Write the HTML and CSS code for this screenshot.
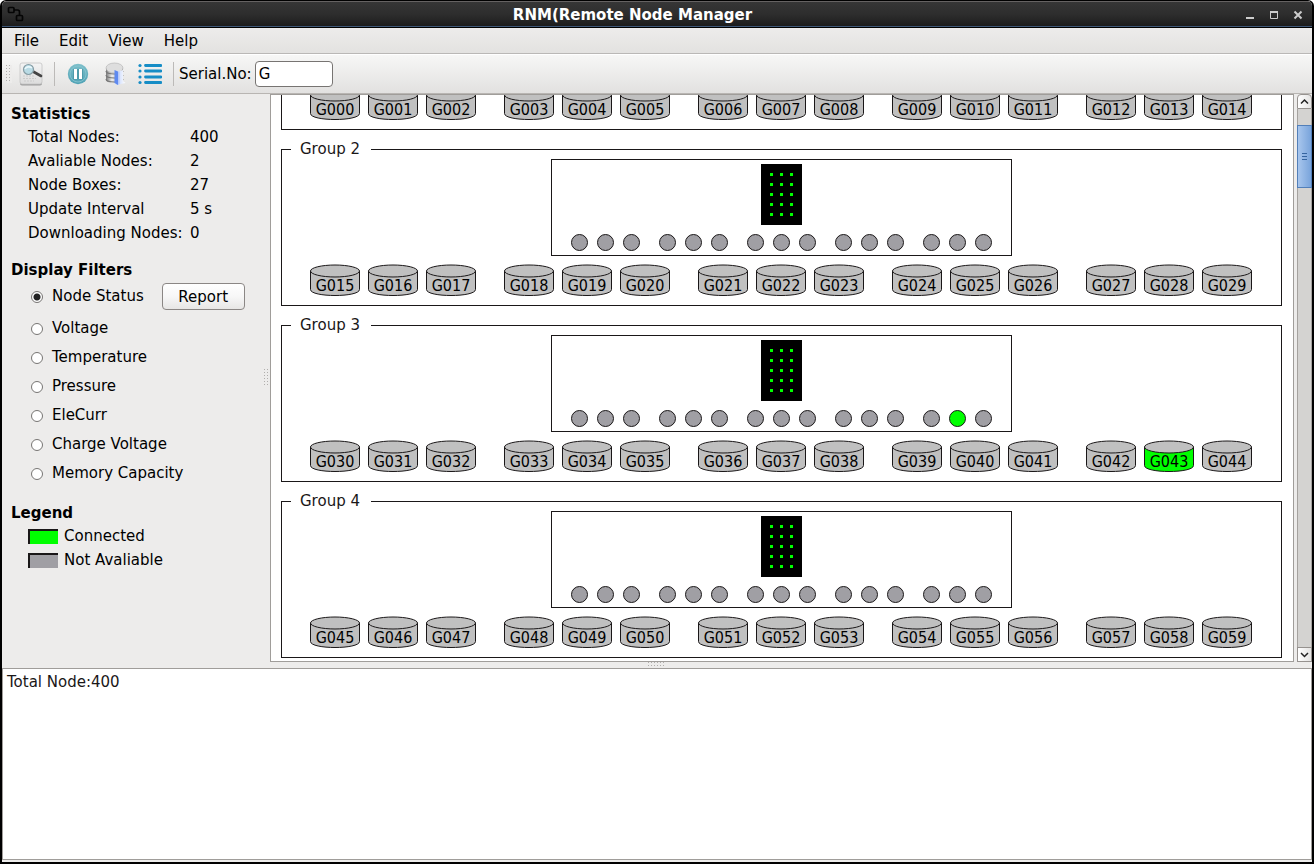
FILE: index.html
```html
<!DOCTYPE html>
<html lang="en">
<head>
<meta charset="utf-8">
<title>RNM(Remote Node Manager</title>
<link rel="stylesheet" href="styles.css">
</head>
<body>
<div class="window">
  <header class="titlebar">
    <svg class="app-icon" width="18" height="18" viewBox="0 0 18 18" fill="none" stroke="#050505" stroke-width="1.7"><rect x="1.500" y="1.500" width="5.500" height="5" rx="1"/><rect x="9.500" y="9.500" width="6" height="5" rx="1"/><path d="M7 4h3.500q2 0 2 2v3.500"/></svg>
    <h1 class="title">RNM(Remote Node Manager</h1>
    <div class="window-buttons">
      <button type="button" aria-label="Minimize"><svg width="10" height="10"><path d="M1 8h8" stroke="#ccc" stroke-width="2"/></svg></button>
      <button type="button" aria-label="Maximize"><svg width="10" height="10"><path d="M1.500 2.500h7v6h-7z" fill="none" stroke="#ccc"/><path d="M1 2h8" stroke="#ccc" stroke-width="2"/></svg></button>
      <button type="button" aria-label="Close"><svg width="10" height="10"><path d="M1.500 1.500l7 7M8.500 1.500l-7 7" stroke="#ccc" stroke-width="2"/></svg></button>
    </div>
  </header>
  <nav class="menubar">
    <button type="button">File</button><button type="button">Edit</button><button type="button">View</button><button type="button">Help</button>
  </nav>
  <div class="toolbar">
    <span class="grip toolbar-grip"></span>
    <button type="button" class="tool tool-search" aria-label="Search">
      <svg width="24" height="24" viewBox="0 0 24 24">
        <defs><linearGradient id="paper" x2="0" y2="1"><stop stop-color="#f4f4f4"/><stop offset="1" stop-color="#dcdcdc"/></linearGradient></defs>
        <rect x="1" y="2" width="22" height="21.500" rx="2" fill="#9c9c9c"/><rect x="1" y="1" width="22" height="21" rx="2" fill="url(#paper)" stroke="#c4c4c4" stroke-width=".8"/>
        <path d="M4 14h12M4 16.500h13M5 19h10" stroke="#cbcbcb" stroke-dasharray="2 1"/>
        <path d="M14 9.500l8 4.500" stroke="#444" stroke-width="2.600" stroke-linecap="round"/>
        <circle cx="9.500" cy="7.500" r="5" fill="#b9dbe5" stroke="#879da5" stroke-width="1.200"/><path d="M6 7a4 3 0 0 1 7-1" fill="none" stroke="#e9f8fc" stroke-width="1.600"/>
      </svg>
    </button>
    <span class="separator"></span>
    <button type="button" class="tool tool-pause" aria-label="Pause">
      <svg width="24" height="24" viewBox="0 0 24 24"><defs><linearGradient id="teal" x2="0" y2="1"><stop stop-color="#7dbfca"/><stop offset="1" stop-color="#50a2b5"/></linearGradient></defs><circle cx="12" cy="12" r="10.200" fill="url(#teal)"/><circle cx="12" cy="12" r="8" fill="none" stroke="#8ac7d0" stroke-width=".8"/><path d="M9.500 7v10.500M14.500 7v10.500" stroke="#4794a5" stroke-width="4.500"/><path d="M9.500 7v10M14.500 7v10" stroke="#fff" stroke-width="3"/></svg>
    </button>
    <button type="button" class="tool tool-data" aria-label="Database">
      <svg width="24" height="24" viewBox="0 0 24 24"><defs><linearGradient id="metal"><stop stop-color="#777"/><stop offset=".35" stop-color="#eee"/><stop offset="1" stop-color="#999"/></linearGradient><linearGradient id="sheet"><stop stop-color="#c1d2fb"/><stop offset="1" stop-color="#fff"/></linearGradient></defs>
        <path d="M3 6v12c0 4 17 4 17 0V6z" fill="url(#metal)"/><path d="M3 9c0 4 17 4 17 0M3 13c0 4 17 4 17 0M3 17c0 4 17 4 17 0" fill="none" stroke="#777" stroke-width="1.200"/><ellipse cx="11.500" cy="6" rx="8.500" ry="5" fill="#dedede" stroke="#b0b0b0" stroke-width=".6"/>
        <path d="M14 10l6-2v11l2.500 2-9 2z" fill="url(#sheet)"/><path d="M11.500 8l3.500 1.500V23l-3.500-2z" fill="#5f8af0"/><path d="M15 9.500V23l1.500-1V10z" fill="#b6cafa"/></svg>
    </button>
    <button type="button" class="tool tool-list" aria-label="List">
      <svg width="24" height="24" viewBox="0 0 24 24"><path d="M7.500 3.500H23M7.500 9H23M7.500 15H23M7.500 20.500H23" stroke="#168dc6" stroke-width="2.800" stroke-linecap="round"/><g fill="#168dc6"><circle cx="2" cy="3.500" r="1.600"/><circle cx="2" cy="9" r="1.600"/><circle cx="2" cy="15" r="1.600"/><circle cx="2" cy="20.500" r="1.600"/></g></svg>
    </button>
    <span class="separator"></span>
    <label for="serial">Serial.No:</label><input class="serial" id="serial" type="text" value="G">
  </div>
  <main class="main">
    <aside class="sidebar">
      <section>
        <h2>Statistics</h2>
        <dl class="stats">
          <dt>Total Nodes:</dt><dd>400</dd>
          <dt>Avaliable Nodes:</dt><dd>2</dd>
          <dt>Node Boxes:</dt><dd>27</dd>
          <dt>Update Interval</dt><dd>5 s</dd>
          <dt>Downloading Nodes:</dt><dd>0</dd>
        </dl>
      </section>
      <section>
        <h2>Display Filters</h2>
        <div class="filters">
          <div class="filter filter-first"><label><input type="radio" name="filter" checked>Node Status</label><button type="button" class="report">Report</button></div>
          <div class="filter"><label><input type="radio" name="filter">Voltage</label></div>
          <div class="filter"><label><input type="radio" name="filter">Temperature</label></div>
          <div class="filter"><label><input type="radio" name="filter">Pressure</label></div>
          <div class="filter"><label><input type="radio" name="filter">EleCurr</label></div>
          <div class="filter"><label><input type="radio" name="filter">Charge Voltage</label></div>
          <div class="filter"><label><input type="radio" name="filter">Memory Capacity</label></div>
        </div>
      </section>
      <section>
        <h2>Legend</h2>
        <ul class="legend">
          <li><span class="swatch swatch-on"></span>Connected</li>
          <li><span class="swatch"></span>Not Avaliable</li>
        </ul>
      </section>
    </aside>
    <div class="splitter-v"><span class="grip splitter-grip-v"></span></div>
    <div class="canvas" id="canvas"></div>
    <div class="scrollbar">
      <button type="button" class="arrow arrow-up" aria-label="Scroll up"><svg width="13" height="13"><path d="M3 8.500l3.500-3.500 3.500 3.500" fill="none" stroke="#222" stroke-width="1.500"/></svg></button>
      <div class="track"><div class="thumb"><svg width="13" height="9"><path d="M4 1.500h5M4 4.500h5M4 7.500h5" stroke="#35649f"/></svg></div></div>
      <button type="button" class="arrow" aria-label="Scroll down"><svg width="13" height="13"><path d="M3 5l3.500 3.500L10 5" fill="none" stroke="#222" stroke-width="1.500"/></svg></button>
    </div>
  </main>
  <div class="splitter-h"><span class="grip splitter-grip-h"></span></div>
  <div class="log">Total Node:400</div>
</div>
<script src="app.js"></script>
</body>
</html>
```

FILE: styles.css
```css
* { box-sizing: border-box; }
body, h1, h2, dl, dd, ul { margin: 0; padding: 0; }
body, button, input {
  font-family: "DejaVu Sans", sans-serif;
  font-size: 15px;
  line-height: 20px;
  color: #000;
}
button { margin: 0; padding: 0; border: 0; background: none; }
svg { display: block; }

.window {
  display: flex;
  flex-direction: column;
  height: 100vh;
  background: #edeceb;
  border: solid #000;
  border-width: 1px 2px 2px;
  border-radius: 6px 6px 0 0;
  overflow: hidden;
}

.titlebar {
  display: flex;
  align-items: center;
  flex: none;
  height: 27px;
  padding: 0 9px 0 5px;
  background: linear-gradient(#363636, #2d2d2d 50%, #1b1b1b);
  border-top: 1px solid #656262;
  border-bottom: 1px solid #000;
  box-shadow: inset 0 -1px #3f5878;
}
.title {
  flex: 1;
  padding-right: 5px;
  text-align: center;
  font-size: 15px;
  line-height: 20px;
  color: #fff;
}
.window-buttons { display: flex; gap: 14px; }

.menubar {
  display: flex;
  gap: 2px;
  flex: none;
  height: 26px;
  padding-left: 3px;
  background: linear-gradient(#edeceb, #e3e2e0);
  border-bottom: 1px solid #bab8b6;
}
.menubar button { padding: 1px 9px 0; }

.toolbar {
  display: flex;
  align-items: center;
  flex: none;
  height: 40px;
  padding-left: 4px;
  background: linear-gradient(#f7f7f6, #e2e1e0);
  border-top: 1px solid #fff;
  border-bottom: 1px solid #b8b5b2;
}
.grip {
  background-image: linear-gradient(90deg, transparent 1px, #edeceb 1px), linear-gradient(#b0aeac 1px, transparent 1px);
  background-size: 3px 3px;
}
.toolbar-grip { width: 6px; height: 18px; }
.tool-search { margin: 0 11px 0 7px; }
.separator { width: 1px; height: 24px; background: #bcbab8; }
.tool-pause { margin-left: 11px; }
.tool-data { margin: 0 11px 0 13px; }
.tool-list { margin-right: 11px; }
.toolbar label { margin-left: 5px; }
.serial {
  width: 78px;
  height: 26px;
  margin-left: 3px;
  padding: 0 3px;
  border: 1px solid #777472;
  border-radius: 4px;
  background: #fff;
}

.main { display: flex; flex: 1; min-height: 0; }
.sidebar { width: 262px; flex: none; padding: 10px 0 0 9px; }
.sidebar section { margin-bottom: 15px; }
.sidebar h2 { font-size: 15px; line-height: 21px; }
.stats {
  display: grid;
  grid-template-columns: 162px auto;
  grid-auto-rows: 24px;
  align-items: center;
  padding-left: 17px;
}
.filters { padding: 1px 0 0 20px; }
.filter { display: flex; align-items: center; height: 29px; }
.filter-first { margin-bottom: 3px; }
.filter label { display: flex; align-items: center; line-height: 21px; }
.filter input {
  appearance: none;
  width: 12px;
  height: 12px;
  margin: 0 9px 0 0;
  border: 1px solid #777573;
  border-radius: 50%;
  background: #fff;
}
.filter input:checked { background: radial-gradient(circle, #222 3px, #fff 4px); }
.report {
  width: 83px;
  height: 27px;
  margin-left: 18px;
  border: 1px solid #8b8785;
  border-radius: 4px;
  background: linear-gradient(#fff, #f7f7f7 50%, #e7e6e5);
}
.legend { list-style: none; padding-left: 17px; }
.legend li { display: flex; align-items: center; gap: 6px; height: 24px; }
.swatch {
  width: 30px;
  height: 15px;
  background: #a09fa4;
  border: solid #1a1718;
  border-width: 2px 0 0 2px;
}
.swatch-on { background: #0f0; }

.splitter-v { display: flex; align-items: center; flex: none; width: 6px; }
.splitter-grip-v { width: 6px; height: 18px; }
.splitter-h { display: flex; align-items: center; justify-content: center; flex: none; height: 6px; }
.splitter-grip-h { width: 18px; height: 6px; }

.canvas {
  display: flex;
  flex-direction: column;
  gap: 10px;
  flex: 1;
  min-width: 0;
  padding: 10px 11px 10px 10px;
  overflow: hidden;
  background: #fff;
  border: 1px solid #a09d9a;
}
.group {
  flex: none;
  min-width: 0;
  margin: 0;
  padding: 0 9px 9px;
  border: 1px solid #1a1718;
}
.group legend { width: 80px; height: 19px; padding: 0 9px; line-height: 18px; color: #1a1718; }
.box {
  display: flex;
  flex-direction: column;
  align-items: center;
  gap: 9px;
  width: 461px;
  margin: 0 auto 8px;
  padding: 4px 0;
  border: 1px solid #1a1718;
}
.lamps, .nodes { display: flex; justify-content: center; }
.lamps { gap: 19px; }
.nodes { gap: 28px; padding-right: 1px; }
.trio { display: flex; gap: 8px; }
.lamps .trio { gap: 9px; }
.lamp {
  width: 17px;
  height: 17px;
  border: 1px solid #1a1718;
  border-radius: 50%;
  background: #a09fa4;
}
.lamp-on { background: #0f0; }
.node {
  display: grid;
  width: 50px;
  height: 32px;
  justify-items: center;
  align-items: end;
  font-family: "DejaVu Sans Condensed", "DejaVu Sans", sans-serif;
  font-stretch: condensed;
  font-size: 16px;
  line-height: 19px;
}
.node svg, .node span { grid-area: 1 / 1; }
.node span { padding-bottom: 1px; }
.body, .top { fill: silver; stroke: #1a1718; }
.node-on .body { fill: #0f0; }

.scrollbar { display: flex; flex-direction: column; flex: none; width: 15px; margin-left: 3px; }
.arrow {
  flex: none;
  width: 15px;
  height: 15px;
  border: 1px solid #96928f;
  background: linear-gradient(90deg, #fff, #e4e3e2);
}
.arrow-up { border-radius: 4px 4px 0 0; }
.track { flex: 1; padding-top: 16px; background: #d4d3d1; border: solid #a5a29f; border-width: 0 1px; }
.thumb {
  display: flex;
  align-items: center;
  justify-content: center;
  height: 63px;
  margin: 0 -1px;
  background: linear-gradient(90deg, #a8c6ed, #79a4db);
  border: 1px solid #527fb9;
}
.log {
  flex: none;
  height: 22.2vh;
  margin-bottom: 2px;
  padding: 3px 4px;
  line-height: 21px;
  background: #fff;
  border: 1px solid #a09d9a;
  color: #1a1718;
}
```

FILE: app.js
```js
const TRIOS = 5;
const PER_TRIO = 3;
const PER_GROUP = TRIOS * PER_TRIO;
const connected = new Set([43]);

function ledPanel() {
  let dots = "";
  for (let y = 9; y < 58; y += 10) {
    for (let x = 9; x < 38; x += 10) {
      dots += `<rect x="${x}" y="${y}" width="3" height="3" fill="#0f0"/>`;
    }
  }
  return `<svg width="41" height="61"><rect width="41" height="61"/>${dots}</svg>`;
}

function lamp(id) {
  return `<span class="lamp${connected.has(id) ? " lamp-on" : ""}"></span>`;
}

function node(id) {
  const name = "G" + String(id).padStart(3, "0");
  return `<div class="node${connected.has(id) ? " node-on" : ""}">
    <svg width="50" height="32"><path class="body" d="M.5 7v18.500c0 8 49 8 49 0V7"/><ellipse class="top" cx="25" cy="7" rx="24.500" ry="6"/></svg>
    <span>${name}</span></div>`;
}

function trios(first, draw) {
  let html = "";
  for (let t = 0; t < TRIOS; t++) {
    html += '<div class="trio">';
    for (let i = 0; i < PER_TRIO; i++) html += draw(first + t * PER_TRIO + i);
    html += "</div>";
  }
  return html;
}

// The first group starts above the visible part, so it carries no caption.
const captions = ["", "Group 2", "Group 3", "Group 4"];
const canvas = document.getElementById("canvas");
captions.forEach((caption, g) => {
  const first = g * PER_GROUP;
  canvas.insertAdjacentHTML("beforeend", `<fieldset class="group">
    <legend>${caption}</legend>
    <div class="box">${ledPanel()}<div class="lamps">${trios(first, lamp)}</div></div>
    <div class="nodes">${trios(first, node)}</div>
  </fieldset>`);
});
canvas.scrollTop = 141;
```
